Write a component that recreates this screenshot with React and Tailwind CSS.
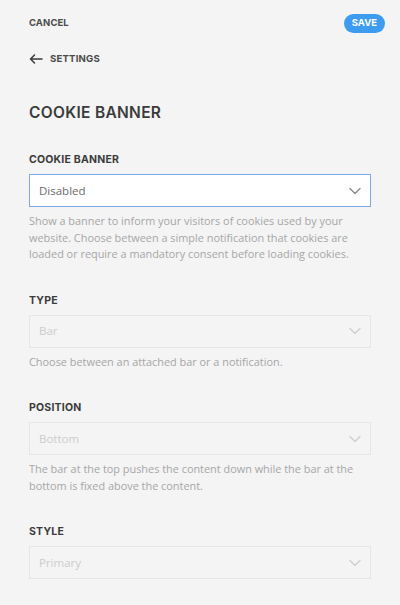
import React from 'react';

const heading = { fontFamily: 'Inter, "DejaVu Sans", sans-serif' };

const Chevron = ({ className }) => (
    <svg className={className} width="12" height="8" viewBox="0 0 12 8" fill="none">
        <path d="M1 1.5l5 5 5-5" stroke="currentColor" strokeWidth="1.4" strokeLinecap="round" strokeLinejoin="round" />
    </svg>
);

const Field = ({ label, value, description, active = false }) => (
    <div className="flex flex-col">
        <div className="text-[10.5px] font-bold uppercase tracking-[0.02em] text-[#3b3b3b] h-[16px] leading-[16px]" style={heading}>
            {label}
        </div>
        <div
            className={
                active
                    ? 'mt-[6px] h-[33px] flex items-center justify-between bg-white border border-[#7aaaea] pl-[9px] pr-[9px]'
                    : 'mt-[6px] h-[33px] flex items-center justify-between border border-[#e6e6e6] pl-[9px] pr-[9px]'
            }
        >
            <span className={active ? 'text-[11.5px] text-[#6b6b6b]' : 'text-[11.5px] text-[#cccccc]'}>{value}</span>
            <Chevron className={active ? 'text-[#8a8a8a]' : 'text-[#cfcfcf]'} />
        </div>
        {description && (
            <p className="mt-[6px] text-[10.9px] leading-[16.5px] text-[#a6a6a6]">{description}</p>
        )}
    </div>
);

export default function App() {
    return (
        <div className="min-h-[605px] w-[400px] bg-[#f4f4f4] px-[29px]" style={{ fontFamily: '"Open Sans", sans-serif' }}>
            <div className="flex items-center justify-between h-[44px] pt-[2px] -mr-[14px]">
                <button className="text-[9.5px] font-bold text-[#4a4a4a] tracking-[0.01em]" style={heading}>CANCEL</button>
                <button className="h-[19px] px-[8px] rounded-full bg-[#3d9bf0] text-white text-[9.5px] font-bold" style={heading}>
                    SAVE
                </button>
            </div>
            <div className="flex items-center gap-[7px] h-[30px]">
                <svg width="14" height="10" viewBox="0 0 14 10" fill="none">
                    <path d="M13 5H1.5M5.5 1L1.5 5l4 4" stroke="#3a3a3a" strokeWidth="1.5" strokeLinecap="round" strokeLinejoin="round" />
                </svg>
                <span className="text-[9.6px] font-bold text-[#4a4a4a] tracking-[0.02em]" style={heading}>SETTINGS</span>
            </div>
            <h1 className="mt-[29px] text-[15.5px] font-semibold text-[#3b3b3b] tracking-[0.02em] leading-[20px]" style={heading}>
                COOKIE BANNER
            </h1>
            <div className="mt-[29px] flex flex-col gap-[30px]">
                <Field
                    active
                    label="Cookie Banner"
                    value="Disabled"
                    description="Show a banner to inform your visitors of cookies used by your website. Choose between a simple notification that cookies are loaded or require a mandatory consent before loading cookies."
                />
                <Field label="Type" value="Bar" description="Choose between an attached bar or a notification." />
                <Field
                    label="Position"
                    value="Bottom"
                    description="The bar at the top pushes the content down while the bar at the bottom is fixed above the content."
                />
                <Field label="Style" value="Primary" />
            </div>
        </div>
    );
}
